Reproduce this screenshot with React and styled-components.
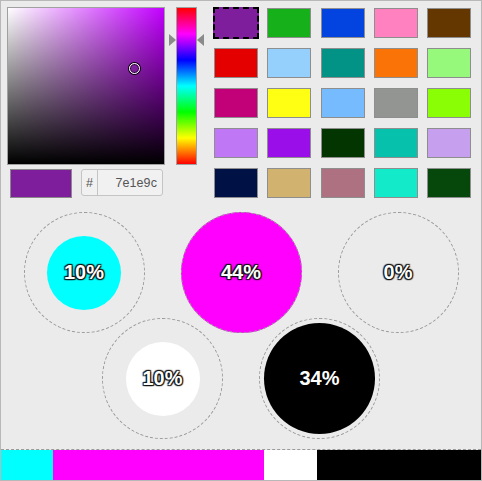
import React from "react";
import styled, { createGlobalStyle } from "styled-components";

const Global = createGlobalStyle`
  html, body { margin: 0; padding: 0; background: #ebebeb; }
  * { box-sizing: border-box; }
`;

const Frame = styled.div`
  width: 482px;
  height: 481px;
  border: 1px solid #b8b8b8;
  background: #ebebeb;
  display: flex;
  flex-direction: column;
  font-family: "Liberation Sans", Arial, sans-serif;
  overflow: hidden;
`;

const Top = styled.div`
  display: flex;
  padding: 6px 0 0 6px;
`;

const PickerColumn = styled.div`
  display: flex;
  flex-direction: column;
`;

const PickerRow = styled.div`
  display: flex;
  gap: 11px;
`;

const SatBox = styled.div`
  position: relative;
  width: 158px;
  height: 158px;
  border: 1px solid #a0a0a0;
  background:
    linear-gradient(to top, #000, rgba(0, 0, 0, 0)),
    linear-gradient(to right, #fff, ${(p) => p.$hue});
`;

const Cursor = styled.div`
  position: absolute;
  width: 11px;
  height: 11px;
  margin: -5.5px 0 0 -5.5px;
  border-radius: 50%;
  border: 1px solid #fff;
  box-shadow: 0 0 0 1px #000, inset 0 0 0 1px rgba(0, 0, 0, 0.7);
`;

const HueWrap = styled.div`
  position: relative;
`;

const HueBar = styled.div`
  width: 21px;
  height: 158px;
  border: 1px solid #a0a0a0;
  background: linear-gradient(
    to bottom,
    #f00 0%,
    #f0f 16.67%,
    #00f 33.33%,
    #0ff 50%,
    #0f0 66.67%,
    #ff0 83.33%,
    #f00 100%
  );
`;

const Arrow = styled.div`
  position: absolute;
  width: 0;
  height: 0;
  border-top: 6px solid transparent;
  border-bottom: 6px solid transparent;
  ${(p) =>
    p.$side === "left"
      ? `left: -7px; border-left: 7px solid #8a8a8a;`
      : `left: 21px; border-right: 7px solid #8a8a8a;`}
`;

const BottomRow = styled.div`
  display: flex;
  align-items: flex-start;
  margin-top: 4px;
  padding-left: 3px;
  gap: 9px;
`;

const CurrentSwatch = styled.div`
  width: 62px;
  height: 29px;
  border: 1px solid #8a8a8a;
  background: ${(p) => p.$color};
`;

const HexBox = styled.div`
  display: flex;
  width: 82px;
  height: 27px;
  border: 1px solid #c4c4c4;
  border-radius: 3px;
  background: #f1f1f1;
  font-size: 12.5px;
  color: #555;
`;

const HexPrefix = styled.div`
  width: 16px;
  border-right: 1px solid #c4c4c4;
  display: flex;
  align-items: center;
  justify-content: center;
  padding-top: 1px;
`;

const HexValue = styled.div`
  flex: 1;
  display: flex;
  align-items: center;
  justify-content: flex-end;
  padding: 1px 5px 0 0;
  letter-spacing: 0.1px;
`;

const SwatchGrid = styled.div`
  display: grid;
  grid-template-columns: repeat(5, 44px);
  grid-auto-rows: 30px;
  column-gap: 9.33px;
  row-gap: 10px;
  margin: 1px 0 0 17px;
`;

const Swatch = styled.div`
  background: ${(p) => p.$color};
  border: ${(p) => (p.$selected ? "2px dashed #000" : "1px solid #8e8e8e")};
  margin: ${(p) => (p.$selected ? "-1px" : "0")};
`;

const Bubbles = styled.div`
  margin-top: 14px;
  display: flex;
  flex-direction: column;
`;

const BubbleRow = styled.div`
  display: flex;
  justify-content: center;
  gap: 36px;
  margin-top: ${(p) => p.$overlap || 0}px;
`;

const Slot = styled.div`
  width: 121px;
  height: 121px;
  display: grid;
  place-items: center;
`;

const Fill = styled.div`
  grid-area: 1 / 1;
  border-radius: 50%;
  background: ${(p) => p.$color};
`;

const Ring = styled.div`
  grid-area: 1 / 1;
  width: 121px;
  height: 121px;
  border-radius: 50%;
  border: 1px dashed #9a9a9a;
`;

const Label = styled.div`
  grid-area: 1 / 1;
  font-size: 20px;
  font-weight: bold;
  color: #fff;
  text-shadow: ${(p) =>
    p.$dark
      ? "none"
      : "1px 1px 1px #111, -1px -1px 1px #111, 1px -1px 1px #111, -1px 1px 1px #111, 0 0 2px #000"};
`;

const Bar = styled.div`
  margin-top: auto;
  height: 31px;
  border-top: 1px dashed #9a9a9a;
  display: flex;
`;

const Segment = styled.div`
  background: ${(p) => p.$color};
`;

const SWATCHES = [
  "#7e1e9c", "#15b01a", "#0343df", "#ff81c0", "#653700",
  "#e50000", "#95d0fc", "#029386", "#f97306", "#96f97b",
  "#c20078", "#ffff14", "#75bbfd", "#929591", "#89fe05",
  "#bf77f6", "#9a0eea", "#033500", "#06c2ac", "#c79fef",
  "#001146", "#d1b26f", "#ae7181", "#13eac9", "#06470c",
];

const SEGMENTS = [
  { color: "#00ffff", pct: 10, share: 52 },
  { color: "#ff00ff", pct: 44, share: 211 },
  { color: "#ffffff", pct: 10, share: 53 },
  { color: "#000000", pct: 34, share: 164 },
];

const BUBBLES = [
  { color: "#00ffff", pct: 10 },
  { color: "#ff00ff", pct: 44 },
  { color: "#888888", pct: 0 },
  { color: "#ffffff", pct: 10 },
  { color: "#000000", pct: 34, dark: true },
];

function Bubble({ color, pct, dark }) {
  const max = 44;
  const d = pct > 0 ? Math.round(121 * Math.cbrt(pct / max)) : 0;
  return (
    <Slot>
      <Fill $color={color} style={{ width: d, height: d }} />
      <Ring />
      <Label $dark={dark}>{pct}%</Label>
    </Slot>
  );
}

export default function App() {
  const hex = "7e1e9c";
  const hue = 285.7;
  const sat = 0.808;
  const val = 0.612;
  const hueColor = `hsl(${hue}, 100%, 50%)`;
  const inner = 156;
  const huePos = ((360 - hue) / 360) * inner;

  return (
    <>
      <Global />
      <Frame>
        <Top>
          <PickerColumn>
            <PickerRow>
              <SatBox $hue={hueColor}>
                <Cursor style={{ left: sat * inner, top: (1 - val) * inner }} />
              </SatBox>
              <HueWrap>
                <HueBar />
                <Arrow $side="left" style={{ top: huePos - 5 }} />
                <Arrow $side="right" style={{ top: huePos - 5 }} />
              </HueWrap>
            </PickerRow>
            <BottomRow>
              <CurrentSwatch $color={`#${hex}`} />
              <HexBox>
                <HexPrefix>#</HexPrefix>
                <HexValue>{hex}</HexValue>
              </HexBox>
            </BottomRow>
          </PickerColumn>
          <SwatchGrid>
            {SWATCHES.map((c, i) => (
              <Swatch key={i} $color={c} $selected={i === 0} />
            ))}
          </SwatchGrid>
        </Top>
        <Bubbles>
          <BubbleRow>
            {BUBBLES.slice(0, 3).map((b, i) => (
              <Bubble key={i} {...b} />
            ))}
          </BubbleRow>
          <BubbleRow $overlap={-15}>
            {BUBBLES.slice(3).map((b, i) => (
              <Bubble key={i} {...b} />
            ))}
          </BubbleRow>
        </Bubbles>
        <Bar>
          {SEGMENTS.map((s, i) => (
            <Segment key={i} $color={s.color} style={{ flexGrow: s.share }} />
          ))}
        </Bar>
      </Frame>
    </>
  );
}
